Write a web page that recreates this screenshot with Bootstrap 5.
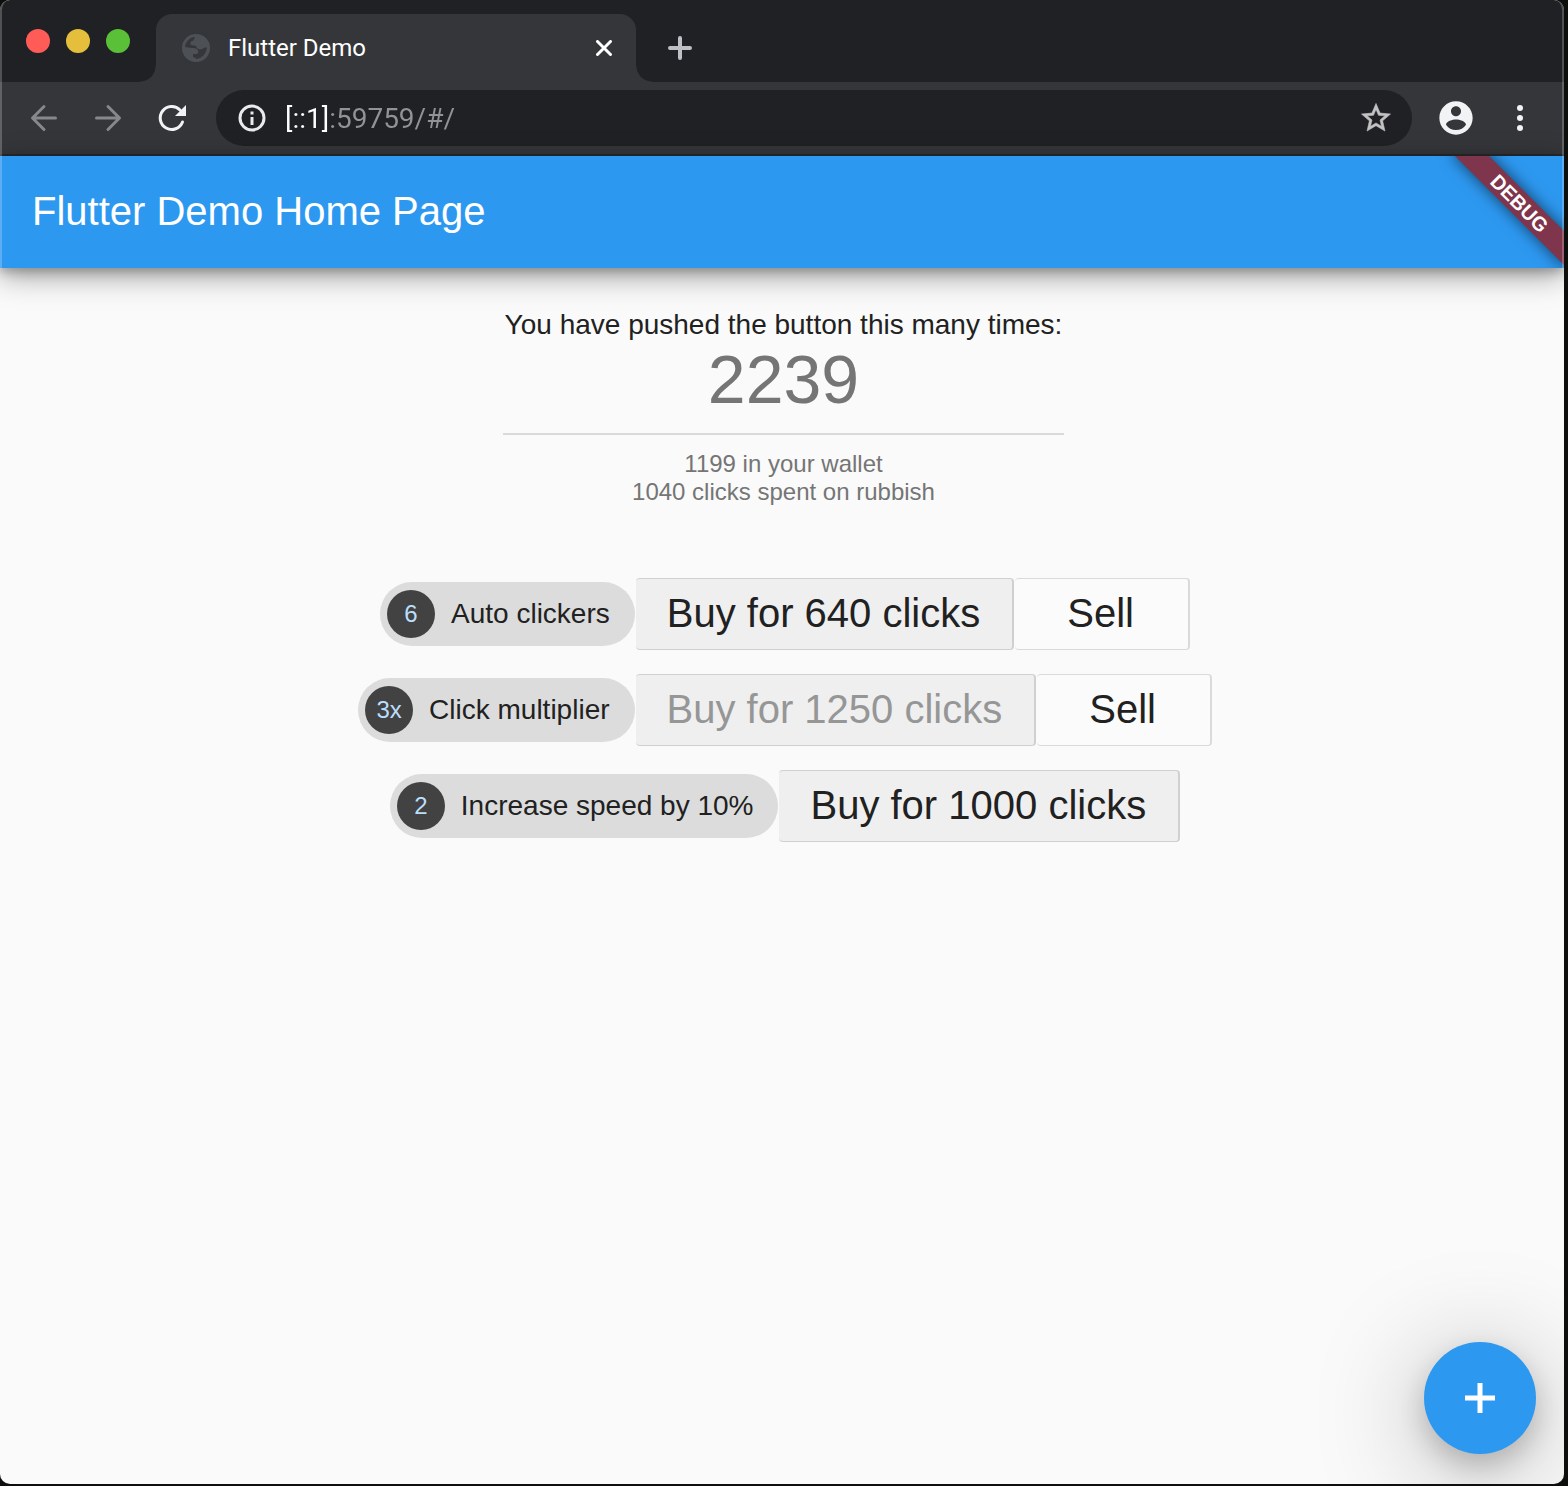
<!DOCTYPE html>
<html lang="en">
<head>
<meta charset="utf-8">
<meta name="viewport" content="width=device-width, initial-scale=1">
<title>Flutter Demo</title>
<link href="https://cdn.jsdelivr.net/npm/bootstrap@5.3.0/dist/css/bootstrap.min.css" rel="stylesheet">
<style>
  body { background: #0d0f0c; font-family: "Liberation Sans", Arial, sans-serif; color: #212121; padding: 0 4px 2px 0; }
  svg { display: block; }
  button, a { color: inherit; }
  .plain { background: none; border: 0; padding: 0; }

  .browser { min-height: calc(100vh - 2px); background: #fafafa; border-radius: 10px; overflow: hidden; }
  .chrome-edge { position: absolute; inset: 0; height: 268px; pointer-events: none; z-index: 5;
    border: 2px solid rgba(255, 255, 255, .22); border-top: 0; border-bottom: 0; border-radius: 10px 10px 0 0; }

  .tabstrip { height: 82px; background: #202124; padding-left: 26px; }
  .lights { gap: 16px; padding-top: 29px; width: 130px; }
  .light { width: 24px; height: 24px; border-radius: 50%; }
  .light-close { background: #ff5c57; }
  .light-min { background: #e5bf3c; }
  .light-max { background: #5ac038; }
  .page-tab { position: relative; width: 480px; height: 68px; background: #35363a; border-radius: 16px 16px 0 0;
    padding: 0 24px 0 26px; gap: 18px; color: #fff; font: 24px/28px Roboto, sans-serif; }
  .page-tab::before, .page-tab::after { content: ""; position: absolute; bottom: 0; width: 16px; height: 16px; }
  .page-tab::before { right: 100%; background: radial-gradient(circle at 0 0, #202124 15px, #35363a 16px); }
  .page-tab::after { left: 100%; background: radial-gradient(circle at 100% 0, #202124 15px, #35363a 16px); }
  .newtab { height: 68px; margin-left: 32px; }

  .toolbar { height: 74px; background: #35363a; border-bottom: 2px solid #27292c; padding: 0 28px; }
  .nav-icons { gap: 32px; width: 188px; }
  .omnibox { height: 56px; border-radius: 28px; background: #202124; padding: 0 20px 0 22px; gap: 19px; }
  .omnibox input { border: 0; outline: 0; padding: 2px 0 0; min-width: 0; font: 28px/36px Roboto, sans-serif; color: transparent;
    background: linear-gradient(90deg, #fff 45px, #929396 45px); -webkit-background-clip: text; background-clip: text; }

  .appbar { position: relative; z-index: 1; height: 112px; background: #2d98f0; color: #fff; padding: 0 32px 2px;
    box-shadow: 0 4px 10px rgba(0, 0, 0, .24), 0 8px 28px rgba(0, 0, 0, .36); }
  .appbar h1 { font-size: 40px; line-height: 48px; font-weight: 400; }
  .ribbon-clip { position: absolute; inset: 0; overflow: hidden; pointer-events: none; }
  .ribbon { position: absolute; top: 34px; right: -34px; width: 160px; height: 24px; padding-left: 4px; transform: rotate(45deg);
    background: #7f354b; box-shadow: 0 0 16px rgba(0, 0, 0, .6); font-size: 20px; line-height: 24px; font-weight: 700; text-align: center; }

  main { padding: 40px 0 32px 3px; }
  .lead-line { font-size: 28px; line-height: 34px; }
  .counter { font-size: 68px; line-height: 74px; color: #757575; }
  .stats { padding: 0 2px; }
  .rule { height: 2px; background: #dadada; margin: 17px -2px 15px; }
  .wallet { font-size: 24px; line-height: 28px; color: #757575; }

  .shop { margin-top: 72px; gap: 24px; padding-left: 3px; }
  .shop-row { gap: 1px; }
  .chip { height: 64px; border-radius: 32px; background: #dcdcdc; padding: 0 25px 0 7px; gap: 16px; font-size: 28px; line-height: 32px; }
  .avatar { width: 48px; height: 48px; border-radius: 50%; background: #424242; color: #bbdefb; font-size: 24px; }
  .shop-btn { height: 72px; padding: 0 32px 2px 31px; border: 1px solid #d0d0d0; border-left: 0; border-right-width: 2px; border-radius: 4px;
    background: #efefef; color: #212121; font-size: 40px; line-height: 48px; }
  .shop-btn:disabled { color: #969696; }
  .sell-btn { background: #fbfbfb; border-color: #dadada; padding: 0 54px 2px 52px; }

  .fab { position: absolute; right: 28px; bottom: 30px; width: 112px; height: 112px; border-radius: 50%; background: #2d98f0; color: #fff;
    box-shadow: 0 12px 28px rgba(0, 0, 0, .2), 0 16px 110px 4px rgba(0, 0, 0, .28); }
</style>
<script src="https://cdn.jsdelivr.net/npm/bootstrap@5.3.0/dist/js/bootstrap.bundle.min.js"></script>
</head>
<body>
<div class="browser position-relative d-flex flex-column">
  <div class="chrome-edge"></div>
  <div class="tabstrip d-flex align-items-end">
    <div class="lights d-flex align-self-start">
      <button class="plain light light-close" aria-label="Close window"></button>
      <button class="plain light light-min" aria-label="Minimize window"></button>
      <button class="plain light light-max" aria-label="Zoom window"></button>
    </div>
    <div class="page-tab d-flex align-items-center">
      <svg width="28" height="28" viewBox="0 0 28 28" aria-hidden="true">
        <circle cx="14" cy="14" r="14" fill="#4d5156"/>
        <path fill="#35363a" d="M3 13C3.500 7.500 8 3 13 3c-.3 1.500-1.300 1.800-1.300 3.500-2.200.3-3.700 1.500-3.200 3.500.5 1.500 2 1.500 4 1.500 1.500 0 2 1.300 2.300 2.500 1 1 2 1.300 3.700 1.300 2.500 0 2.500-2 6.500-1.800-.5 6-5 11.300-11.500 11.500v-1.500H11V20h3c1.500 0 2.300-.8 2.300-2.200 0-1.800-1.800-3.500-4.300-3.800-3 0-6-.3-9-1z"/>
      </svg>
      <span class="flex-grow-1">Flutter Demo</span>
      <button class="plain" aria-label="Close tab"><svg width="16" height="16" viewBox="0 0 16 16" stroke="#fff" stroke-width="3" stroke-linecap="round"><path d="M1.500 1.500l13 13M14.500 1.500l-13 13"/></svg></button>
    </div>
    <button class="plain newtab" aria-label="New tab"><svg width="24" height="24" viewBox="0 0 24 24" stroke="#bdc1c6" stroke-width="4" stroke-linecap="round"><path d="M12 2v20M2 12h20"/></svg></button>
  </div>

  <div class="toolbar d-flex align-items-center">
    <div class="nav-icons d-flex align-items-center">
      <button class="plain" aria-label="Back"><svg width="32" height="32" viewBox="0 0 32 32" fill="none" stroke="#87888b" stroke-width="3" stroke-linecap="round" stroke-linejoin="round"><path d="M27.500 16H5M16 4.500L4.500 16 16 27.500"/></svg></button>
      <button class="plain" aria-label="Forward"><svg width="32" height="32" viewBox="0 0 32 32" fill="none" stroke="#87888b" stroke-width="3" stroke-linecap="round" stroke-linejoin="round"><path d="M4.500 16H27M16 4.500L27.500 16 16 27.500"/></svg></button>
      <button class="plain" aria-label="Reload"><svg width="32" height="32" viewBox="0 0 32 32" fill="none"><path stroke="#f1f3f4" stroke-width="3" stroke-linecap="round" d="M26.500 20A11.500 11.500 0 1 1 24 8"/><path fill="#f1f3f4" d="M30 3v11H19z"/></svg></button>
    </div>
    <div class="omnibox d-flex align-items-center flex-grow-1">
      <button class="plain" aria-label="Site information"><svg width="28" height="28" viewBox="0 0 28 28" fill="none"><circle cx="14" cy="14" r="12" stroke="#e8eaed" stroke-width="3"/><path fill="#e8eaed" d="M12.500 13h3v8h-3zM12.500 7.500h3v3h-3z"/></svg></button>
      <input class="flex-grow-1" type="text" aria-label="Address" value="[::1]:59759/#/">
      <button class="plain" aria-label="Bookmark this page"><svg width="32" height="32" viewBox="1 1 22 22" fill="#c3c3c4" stroke="#c3c3c4" stroke-width=".4"><path d="M22 9.240l-7.190-.62L12 2 9.190 8.630 2 9.240l5.460 4.730L5.820 21 12 17.270 18.180 21l-1.630-7.030L22 9.240zM12 15.400l-3.760 2.270 1-4.280-3.320-2.880 4.380-.38L12 6.100l1.710 4.040 4.380.38-3.320 2.880 1 4.280L12 15.400z"/></svg></button>
    </div>
    <button class="plain ms-4" aria-label="Profile"><svg width="40" height="40" viewBox="0 0 24 24" fill="#f1f3f4"><path d="M12 2C6.480 2 2 6.480 2 12s4.480 10 10 10 10-4.480 10-10S17.520 2 12 2zm0 3c1.660 0 3 1.340 3 3s-1.340 3-3 3-3-1.340-3-3 1.340-3 3-3zm0 14.200c-2.500 0-4.710-1.280-6-3.220.03-1.990 4-3.080 6-3.080 1.990 0 5.970 1.090 6 3.080-1.290 1.940-3.500 3.220-6 3.220z"/></svg></button>
    <button class="plain ms-4 ps-1" aria-label="Menu"><svg width="32" height="32" viewBox="0 0 32 32" fill="#f1f3f4"><circle cx="16" cy="6" r="3"/><circle cx="16" cy="16" r="3"/><circle cx="16" cy="26" r="3"/></svg></button>
  </div>

  <header class="appbar d-flex align-items-center">
    <h1 class="m-0">Flutter Demo Home Page</h1>
    <div class="ribbon-clip"><div class="ribbon">DEBUG</div></div>
  </header>

  <main class="d-flex flex-column align-items-center flex-grow-1">
    <div class="stats text-center">
      <div class="lead-line">You have pushed the button this many times:</div>
      <div class="counter">2239</div>
      <div class="rule"></div>
      <div class="wallet">1199 in your wallet</div>
      <div class="wallet">1040 clicks spent on rubbish</div>
    </div>

    <div class="shop d-flex flex-column align-items-center">
      <div class="shop-row d-flex align-items-center">
        <div class="chip d-flex align-items-center"><span class="avatar d-flex align-items-center justify-content-center">6</span><span>Auto clickers</span></div>
        <button class="shop-btn">Buy for 640 clicks</button>
        <button class="shop-btn sell-btn">Sell</button>
      </div>
      <div class="shop-row d-flex align-items-center">
        <div class="chip d-flex align-items-center"><span class="avatar d-flex align-items-center justify-content-center">3x</span><span>Click multiplier</span></div>
        <button class="shop-btn" disabled>Buy for 1250 clicks</button>
        <button class="shop-btn sell-btn">Sell</button>
      </div>
      <div class="shop-row d-flex align-items-center">
        <div class="chip d-flex align-items-center"><span class="avatar d-flex align-items-center justify-content-center">2</span><span>Increase speed by 10%</span></div>
        <button class="shop-btn">Buy for 1000 clicks</button>
      </div>
    </div>
  </main>

  <button class="plain fab d-flex align-items-center justify-content-center" aria-label="Increment"><svg width="30" height="30" viewBox="0 0 30 30" fill="#fff"><path d="M12.500 0h5v12.500H30v5H17.500V30h-5V17.500H0v-5h12.500z"/></svg></button>
</div>
</body>
</html>
